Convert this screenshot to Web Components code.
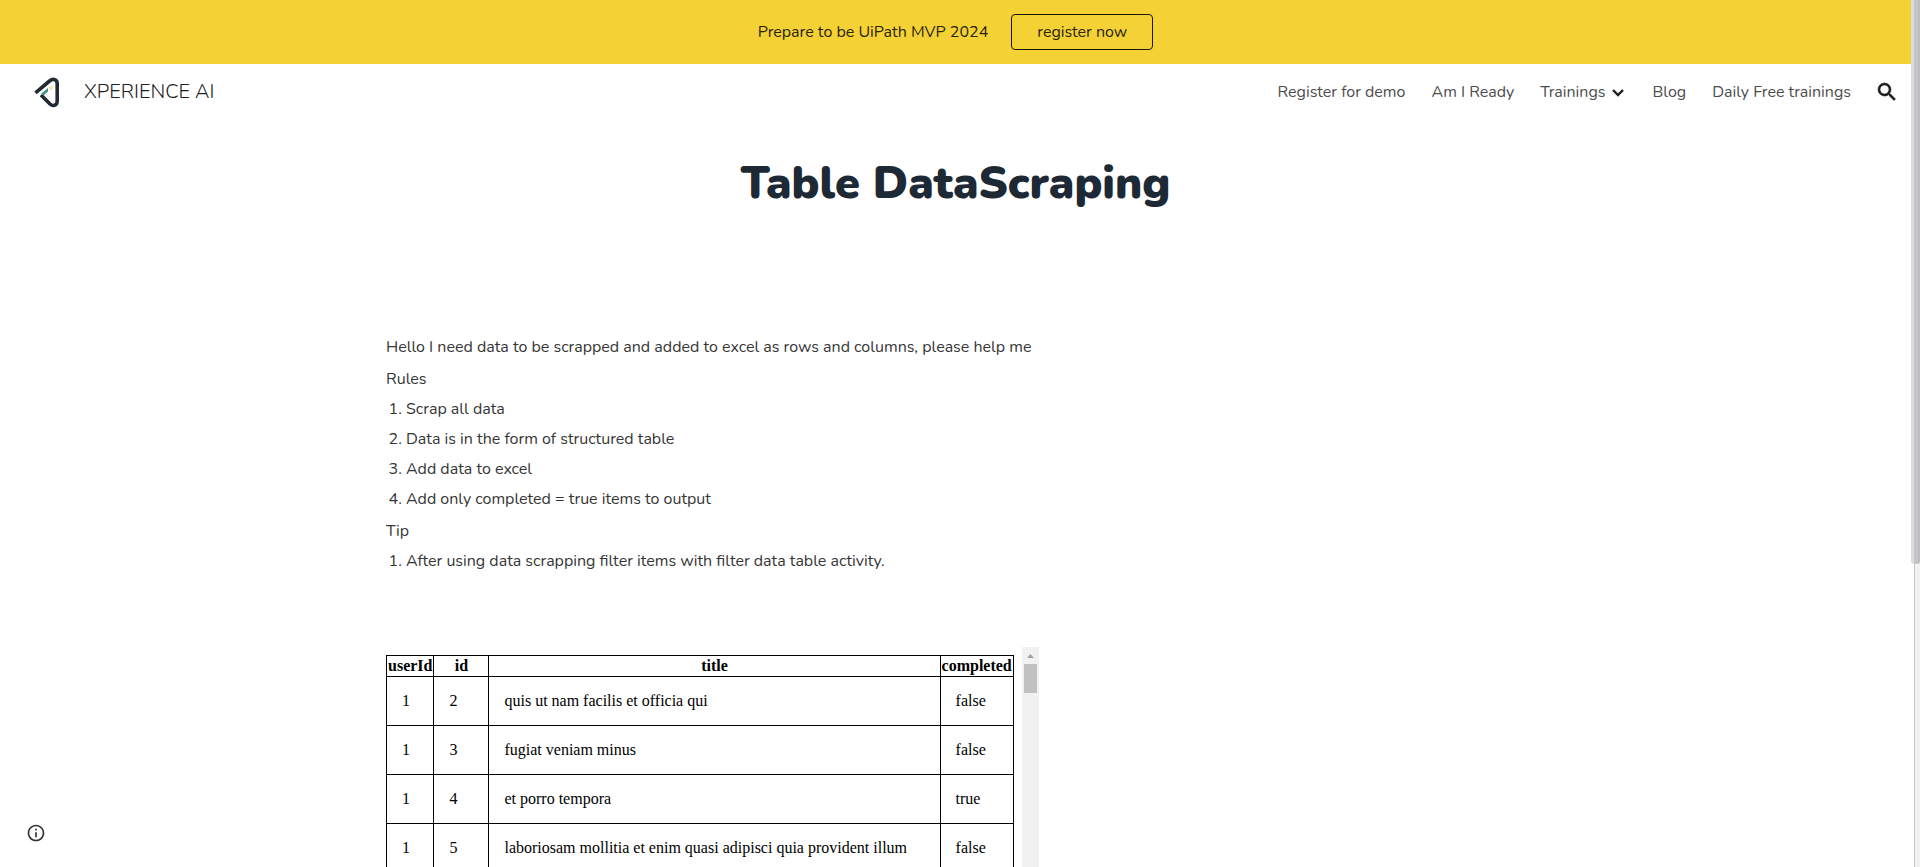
<!DOCTYPE html>
<html lang="en">
<head>
<meta charset="utf-8">
<title>XPERIENCE AI - Table DataScraping</title>
<style>
  body { margin: 0; background: #fff; font: 400 16px/24px Nunito, "Open Sans", sans-serif; color: #212121; }
</style>
</head>
<body>
<site-shell>
  <announcement-banner slot="banner" action="register now">Prepare to be UiPath MVP 2024</announcement-banner>
  <site-header slot="header" name="XPERIENCE AI">
    <nav-item>Register for demo</nav-item>
    <nav-item>Am I Ready</nav-item>
    <nav-item menu>Trainings</nav-item>
    <nav-item>Blog</nav-item>
    <nav-item>Daily Free trainings</nav-item>
  </site-header>
  <page-title>Table DataScraping</page-title>
  <content-section>
    <task-notes></task-notes>
    <data-frame></data-frame>
  </content-section>
</site-shell>

<script>
const define = (name, html, setup) => {
  const template = document.createElement('template');
  template.innerHTML = html;
  customElements.define(name, class extends HTMLElement {
    constructor() {
      super();
      this.attachShadow({ mode: 'open' }).append(template.content.cloneNode(true));
    }
    connectedCallback() { if (setup) setup(this, this.shadowRoot); }
  });
};

define('site-shell', `
  <style>
    :host { display: grid; grid-template-columns: minmax(0, 1fr) 9px; height: 100vh; overflow: hidden; }
    .page { overflow: hidden; }
    page-info { position: absolute; left: 20px; bottom: 18px; }
  </style>
  <div class="page">
    <slot name="banner"></slot>
    <slot name="header"></slot>
    <main><slot></slot></main>
  </div>
  <page-scrollbar></page-scrollbar>
  <page-info></page-info>`);

define('page-scrollbar', `
  <style>
    :host { display: block; background: linear-gradient(90deg, #fff 3px, #c9c9c9 3px 4px, #f1f1f1 4px); }
    .thumb { height: 65%; border-radius: 0 0 3px 3px;
      background: linear-gradient(90deg, #dcdcdc 3px, #b9c7da 3px 4px, #c6c6c6 4px 7px, #bdbdbd 7px); }
  </style>
  <div class="thumb"></div>`);

define('page-info', `
  <style>
    :host { display: block; }
    button { display: grid; place-items: center; width: 32px; height: 32px; padding: 0; border: 0; background: none; }
  </style>
  <button aria-label="Site information">
    <svg width="20" height="20" viewBox="0 0 24 24" fill="#333"><path d="M11 17h2v-6h-2v6zm1-15C6.48 2 2 6.48 2 12s4.480 10 10 10 10-4.480 10-10S17.520 2 12 2zm0 18c-4.410 0-8-3.590-8-8s3.590-8 8-8 8 3.590 8 8-3.590 8-8 8zM11 9h2V7h-2v2z"/></svg>
  </button>`);

define('announcement-banner', `
  <style>
    :host { display: flex; align-items: center; justify-content: center; gap: 23px; height: 64px; background: #f4d235; color: #2b2408; }
    button { box-sizing: border-box; height: 36px; padding: 0 25px; border: 1px solid #1b1606; border-radius: 4px;
      background: none; font: inherit; color: inherit; }
  </style>
  <span><slot></slot></span><button></button>`,
  (host, root) => { root.querySelector('button').textContent = host.getAttribute('action'); });

define('site-header', `
  <style>
    :host { display: flex; align-items: center; justify-content: space-between; height: 56px; padding: 0 12px 0 30px; }
    .brand { display: flex; align-items: center; gap: 22px; font-size: 20px; font-weight: 300; color: #212121; text-decoration: none; }
    nav { display: flex; align-items: center; }
    button { display: grid; place-items: center; margin-left: 11px; padding: 0; border: 0; background: none; }
    svg { display: block; }
  </style>
  <a class="brand" href="#">
    <svg width="32" height="34" viewBox="0 0 32 34" fill="none">
      <path d="M5.500 17.800 19.500 6Q22 4 24.200 4.500Q27.200 5.200 27.200 8.500V26Q27.200 29.500 24.500 30.300Q22 30.900 20 29L11 20" stroke="#222a35" stroke-width="3.600"/>
      <path d="M11 19 18 13V16.500L13.500 20.500Z" fill="#3f8f8b"/>
      <path d="M19.500 12.500 22.500 10V13.500L20 15.500Z" fill="#eee08c"/>
    </svg>
    <span></span>
  </a>
  <nav>
    <slot></slot>
    <button aria-label="Open search">
      <svg width="24" height="24" viewBox="0 0 24 24" fill="#1c1c1c" stroke="#1c1c1c" stroke-width=".6"><path d="M15.500 14h-.79l-.28-.27A6.471 6.471 0 0 0 16 9.500 6.500 6.500 0 1 0 9.500 16c1.610 0 3.090-.59 4.230-1.570l.27.28v.79l5 4.990L20.490 19l-4.990-5zm-6 0C7.010 14 5 11.990 5 9.500S7.010 5 9.500 5 14 7.010 14 9.500 11.990 14 9.500 14z"/></svg>
    </button>
  </nav>`,
  (host, root) => { root.querySelector('.brand span').textContent = host.getAttribute('name'); });

define('nav-item', `
  <style>
    :host { display: block; padding: 0 13px; }
    a { display: flex; align-items: center; gap: 6px; color: #4d4d4d; text-decoration: none; }
    svg { display: none; }
    :host([menu]) svg { display: block; }
  </style>
  <a href="#"><span><slot></slot></span>
    <svg width="15" height="12" viewBox="0 0 15 12" fill="none" stroke="#1c1c1c" stroke-width="2.400"><path d="M2 4 7 9 12 4"/></svg>
  </a>`);

define('page-title', `
  <style>
    :host { display: block; padding: 33px 0 89px; text-align: center; }
    h1 { margin: 0; font-size: 45px; line-height: 62px; font-weight: 900; color: #1d2935; }
  </style>
  <h1><slot></slot></h1>`);

define('content-section', `
  <style>
    :host { display: grid; grid-template-columns: 7fr 5fr; column-gap: 20px; max-width: 1139px; margin: 0 auto; padding: 28px 24px; }
    .column { display: grid; gap: 71px; }
  </style>
  <div class="column"><slot></slot></div>`);

define('task-notes', `
  <style>
    :host { display: block; line-height: 30px; color: #363636; }
    p, ol { margin: 0; }
    p + p, ol + p { margin-top: 2px; }
    ol { padding-left: 20px; }
  </style>
  <p>Hello I need data to be scrapped and added to excel as rows and columns, please help me</p>
  <p>Rules</p>
  <ol>
    <li>Scrap all data</li>
    <li>Data is in the form of structured table</li>
    <li>Add data to excel</li>
    <li>Add only completed = true items to output</li>
  </ol>
  <p>Tip</p>
  <ol><li>After using data scrapping filter items with filter data table activity.</li></ol>`);

define('data-frame', `
  <style>
    :host { display: grid; grid-template-columns: minmax(0, 1fr) 17px; column-gap: 8px; height: 600px; overflow: hidden; }
    table { width: 100%; margin-top: 8px; border-collapse: collapse; align-self: start;
      font: 16px/18px "Liberation Serif", serif; color: #000; }
    th, td { border: 1px solid #000; }
    th { padding: 1px; }
    td { padding: 15px; }
    .user { width: 44px; }
    .id { width: 52px; }
    .done { width: 70px; }
    .bar { display: flex; flex-direction: column; align-items: center; background: #f1f1f1; }
    .bar svg { display: block; }
    .thumb { width: 13px; height: 29px; background: #c1c1c1; }
  </style>
  <table>
    <thead><tr><th class="user">userId</th><th class="id">id</th><th>title</th><th class="done">completed</th></tr></thead>
    <tbody></tbody>
  </table>
  <div class="bar">
    <svg width="17" height="17" viewBox="0 0 17 17"><path d="M5 11 8.500 7 12 11Z" fill="#a3a3a3"/></svg>
    <div class="thumb"></div>
  </div>`,
  (host, root) => {
    const rows = [
      [1, 2, 'quis ut nam facilis et officia qui', false],
      [1, 3, 'fugiat veniam minus', false],
      [1, 4, 'et porro tempora', true],
      [1, 5, 'laboriosam mollitia et enim quasi adipisci quia provident illum', false],
    ];
    const body = root.querySelector('tbody');
    for (const row of rows) {
      const tr = body.insertRow();
      for (const value of row) tr.insertCell().textContent = value;
    }
  });
</script>
</body>
</html>
